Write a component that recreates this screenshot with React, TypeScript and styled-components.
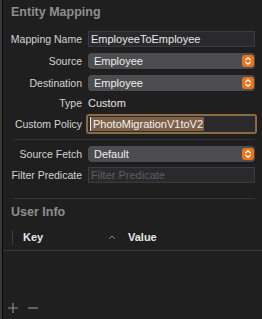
import React from 'react';
import styled, { createGlobalStyle } from 'styled-components';

const GlobalStyle = createGlobalStyle`
  html, body {
    margin: 0;
    padding: 0;
    background: #1f1f20;
  }
  body {
    font-family: "Liberation Sans", Arial, sans-serif;
    -webkit-font-smoothing: antialiased;
  }
`;

const Inspector = styled.div`
  width: 262px;
  height: 319px;
  box-sizing: border-box;
  background: #1f1f20;
  border-left: 2px solid #38383a;
  display: flex;
  overflow: hidden;
`;

const Body = styled.div`
  flex: 1;
  border-left: 1px solid #050505;
  display: flex;
  flex-direction: column;
`;

const SectionTitle = styled.div`
  font-size: 12.5px;
  font-weight: bold;
  color: #8e8e90;
  padding: 5px 0 0 8px;
  height: 22px;
  box-sizing: border-box;
`;

const Form = styled.div`
  display: grid;
  grid-template-columns: 77px 1fr;
  column-gap: 6px;
  align-items: center;
  padding: 9px 7px 0 2px;
`;

const Label = styled.div<{ $mt?: number }>`
  text-align: right;
  font-size: 10.5px;
  color: #d4d4d6;
  white-space: nowrap;
  margin-top: ${(p) => p.$mt ?? 0}px;
`;

const Cell = styled.div<{ $mt?: number }>`
  margin-top: ${(p) => p.$mt ?? 0}px;
`;

const TextField = styled.div<{ $placeholder?: boolean }>`
  height: 16px;
  box-sizing: border-box;
  background: #2a2a2c;
  border: 1px solid #3b3b3d;
  font-size: 11px;
  line-height: 14px;
  padding-left: 2px;
  color: ${(p) => (p.$placeholder ? '#5d5d60' : '#e8e8ea')};
`;

const FocusField = styled.div`
  height: 20px;
  box-sizing: border-box;
  margin: 0 -2px;
  border: 2px solid #8b6a3f;
  border-radius: 3px;
  background: #2a2a2c;
  display: flex;
  align-items: center;
  padding-left: 2px;
`;

const Selected = styled.span`
  background: #7c6148;
  color: #f2f2f2;
  font-size: 11px;
  line-height: 14px;
  padding: 0 1px 0 2px;
  border-left: 1px solid #f0f0f0;
`;

const Popup = styled.div`
  height: 16px;
  box-sizing: border-box;
  background: #4d4d50;
  border-radius: 4px;
  box-shadow: 0 0.5px 0 #19191a;
  display: flex;
  align-items: center;
  justify-content: space-between;
  padding: 0 1px 0 6px;
  font-size: 11px;
  color: #ececee;
`;

const Stepper = styled.div`
  width: 12px;
  height: 12px;
  border-radius: 3px;
  background: #e8741c;
  display: flex;
  align-items: center;
  justify-content: center;
`;

const Value = styled.div`
  font-size: 11px;
  color: #e4e4e6;
`;

const Separator = styled.div<{ $mt: number }>`
  grid-column: 1 / -1;
  height: 1px;
  background: #363638;
  margin: ${(p) => p.$mt}px 0 0 8px;
`;

const UserTitle = styled(SectionTitle)`
  padding-top: 6px;
`;

const TableHeader = styled.div`
  display: flex;
  align-items: center;
  height: 26px;
  margin-top: 3px;
  border-bottom: 1px solid #3a3a3c;
  font-size: 11px;
  font-weight: bold;
  color: #e6e6e8;
`;

const ColDivider = styled.div`
  width: 1px;
  height: 15px;
  background: #3c3c3e;
  margin-left: 9px;
`;

const KeyCol = styled.div`
  width: 85px;
  padding-left: 10px;
`;

const SortIcon = styled.div`
  width: 20px;
  display: flex;
  justify-content: flex-start;
`;

const TableBody = styled.div`
  flex: 1;
`;

const Footer = styled.div`
  display: flex;
  align-items: center;
  gap: 10px;
  height: 22px;
  padding: 0 0 0 5px;
  box-sizing: border-box;
`;

const Chevrons = () => (
  <svg width="8" height="10" viewBox="0 0 8 10">
    <path d="M1.8 3.8 L4 1.6 L6.2 3.8 M1.8 6.2 L4 8.4 L6.2 6.2" stroke="#fff" strokeWidth="1.3" fill="none" strokeLinecap="round" strokeLinejoin="round" />
  </svg>
);

const PopupButton = ({ value }: { value: string }) => (
  <Popup>
    <span>{value}</span>
    <Stepper>
      <Chevrons />
    </Stepper>
  </Popup>
);

const App = () => {
  return (
    <>
      <GlobalStyle />
      <Inspector>
        <Body>
          <SectionTitle>Entity Mapping</SectionTitle>
          <Form>
            <Label>Mapping Name</Label>
            <Cell>
              <TextField>EmployeeToEmployee</TextField>
            </Cell>

            <Label $mt={6}>Source</Label>
            <Cell $mt={6}>
              <PopupButton value="Employee" />
            </Cell>

            <Label $mt={6}>Destination</Label>
            <Cell $mt={6}>
              <PopupButton value="Employee" />
            </Cell>

            <Label $mt={6}>Type</Label>
            <Cell $mt={6}>
              <Value>Custom</Value>
            </Cell>

            <Label $mt={5}>Custom Policy</Label>
            <Cell $mt={5}>
              <FocusField>
                <Selected>PhotoMigrationV1toV2</Selected>
              </FocusField>
            </Cell>

            <Separator $mt={5} />

            <Label $mt={6}>Source Fetch</Label>
            <Cell $mt={6}>
              <PopupButton value="Default" />
            </Cell>

            <Label $mt={5}>Filter Predicate</Label>
            <Cell $mt={5}>
              <TextField $placeholder>Filter Predicate</TextField>
            </Cell>

            <Separator $mt={15} />
          </Form>

          <UserTitle>User Info</UserTitle>
          <TableHeader>
            <ColDivider />
            <KeyCol>Key</KeyCol>
            <SortIcon>
              <svg width="8" height="5" viewBox="0 0 8 5">
                <path d="M1 4 L4 1 L7 4" stroke="#8a8a8c" strokeWidth="1" fill="none" />
              </svg>
            </SortIcon>
            <span>Value</span>
          </TableHeader>
          <TableBody />
          <Footer>
            <svg width="10" height="10" viewBox="0 0 10 10">
              <path d="M5 0 V10 M0 5 H10" stroke="#8e8e90" strokeWidth="1.2" />
            </svg>
            <svg width="10" height="10" viewBox="0 0 10 10">
              <path d="M0 5 H10" stroke="#8e8e90" strokeWidth="1.2" />
            </svg>
          </Footer>
        </Body>
      </Inspector>
    </>
  );
};

export default App;
